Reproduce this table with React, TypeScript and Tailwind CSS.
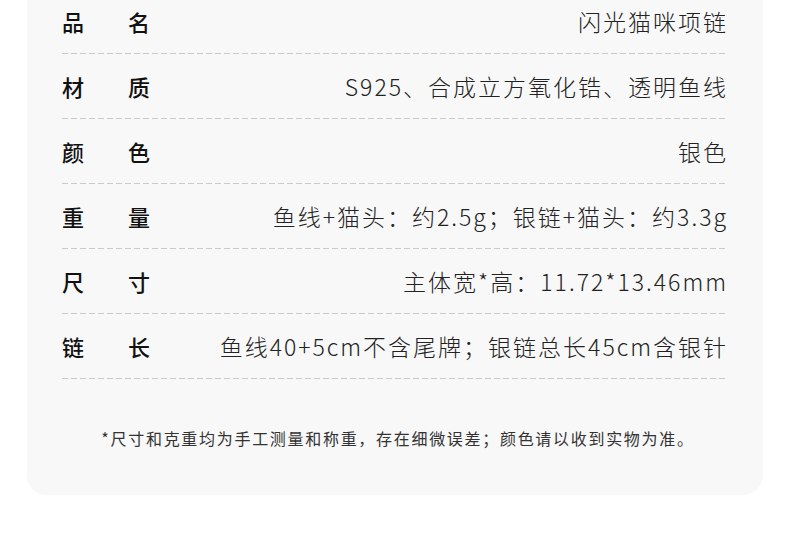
const specs = [
  { label: ["品", "名"], value: "闪光猫咪项链" },
  { label: ["材", "质"], value: "S925、合成立方氧化锆、透明鱼线" },
  { label: ["颜", "色"], value: "银色" },
  { label: ["重", "量"], value: "鱼线+猫头：约2.5g；银链+猫头：约3.3g" },
  { label: ["尺", "寸"], value: "主体宽*高：11.72*13.46mm" },
  { label: ["链", "长"], value: "鱼线40+5cm不含尾牌；银链总长45cm含银针" },
];

function Dashed() {
  return (
    <div className="h-px w-full bg-[repeating-linear-gradient(to_right,#c9c9cf_0,#c9c9cf_6px,transparent_6px,transparent_9px)]" />
  );
}

export default function App() {
  return (
    <div
      className="min-h-screen bg-white"
      style={{ fontFamily: '"Noto Sans CJK SC", "Noto Sans", sans-serif' }}
    >
      <div className="ml-[27px] w-[736px] rounded-b-[20px] bg-[#f8f8f8] px-[35px] pt-[6px] pb-[45px]">
        {specs.map((row, i) => (
          <div key={i}>
            <div
              className={`flex h-[30px] items-center justify-between ${
                i === 0 ? "" : "mt-[17px]"
              } mb-[17px]`}
            >
              <div className="flex w-[88px] justify-between text-[22px] font-medium leading-[30px] text-[#111]">
                <span>{row.label[0]}</span>
                <span>{row.label[1]}</span>
              </div>
              <div className="text-[23px] font-light leading-[30px] tracking-[2px] text-[#222]">
                {row.value}
              </div>
            </div>
            <Dashed />
          </div>
        ))}
        <p className="mt-[47px] pl-[6px] text-center text-[16px] leading-[24px] tracking-[1.7px] text-[#333]">
          *尺寸和克重均为手工测量和称重，存在细微误差；颜色请以收到实物为准。
        </p>
      </div>
    </div>
  );
}
